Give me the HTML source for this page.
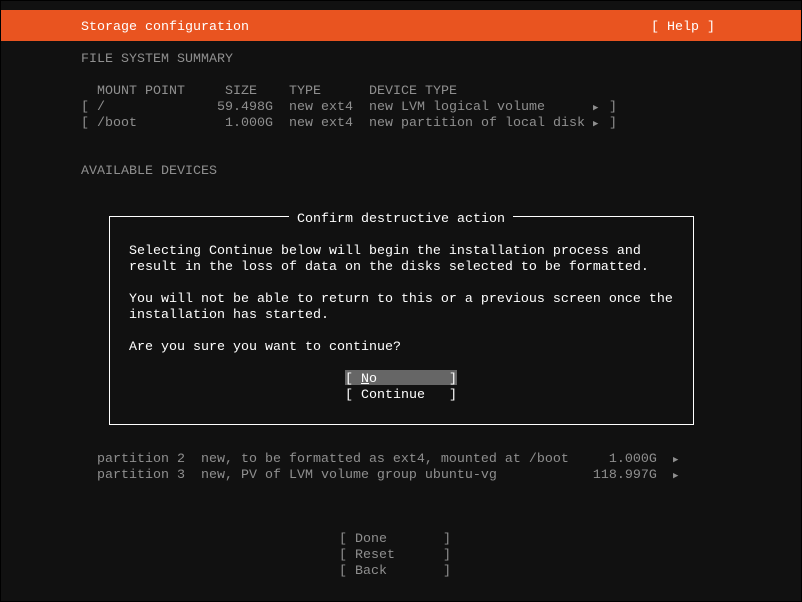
<!DOCTYPE html>
<html><head><meta charset="utf-8"><style>
html,body{margin:0;padding:0;}
body{width:802px;height:602px;background:#000;position:relative;overflow:hidden;font-family:"Liberation Mono",monospace;font-size:13.33px;}
#scr{position:absolute;left:1px;top:1px;width:800px;height:600px;background:#111;}
.t{position:absolute;white-space:pre;line-height:16px;height:16px;color:#8f8f8f;margin-top:3px;}
.w{color:#fff;}
.tr{font-size:9px;vertical-align:1px;}
#bar{position:absolute;left:1px;top:10px;width:800px;height:31px;background:#e95420;}
#dlg{position:absolute;left:109px;top:216px;width:583px;height:207px;border:1px solid #fff;}
#no{position:absolute;left:345px;top:370px;width:112px;height:15px;background:#666;}
</style></head><body>
<div id="scr"></div>
<div id="bar"></div>
<div class="t w" style="left:81px;top:17px">Storage configuration</div>
<div class="t w" style="left:651px;top:17px">[ Help ]</div>
<div class="t" style="left:81px;top:49px">FILE SYSTEM SUMMARY</div>
<div class="t" style="left:97px;top:81px">MOUNT POINT</div>
<div class="t" style="left:225px;top:81px">SIZE</div>
<div class="t" style="left:289px;top:81px">TYPE</div>
<div class="t" style="left:369px;top:81px">DEVICE TYPE</div>
<div class="t" style="left:81px;top:97px">[ /</div>
<div class="t" style="left:217px;top:97px">59.498G</div>
<div class="t" style="left:289px;top:97px">new ext4</div>
<div class="t" style="left:369px;top:97px">new LVM logical volume</div>
<div class="t" style="left:593px;top:97px"><span class="tr">▶</span></div>
<div class="t" style="left:609px;top:97px">]</div>
<div class="t" style="left:81px;top:113px">[ /boot</div>
<div class="t" style="left:225px;top:113px">1.000G</div>
<div class="t" style="left:289px;top:113px">new ext4</div>
<div class="t" style="left:369px;top:113px">new partition of local disk</div>
<div class="t" style="left:593px;top:113px"><span class="tr">▶</span></div>
<div class="t" style="left:609px;top:113px">]</div>
<div class="t" style="left:81px;top:161px">AVAILABLE DEVICES</div>
<div id="dlg"></div>
<div style="position:absolute;left:289px;top:210px;width:224px;height:12px;background:#111"></div>
<div class="t w" style="left:289px;top:209px"> Confirm destructive action </div>
<div class="t w" style="left:129px;top:241px">Selecting Continue below will begin the installation process and</div>
<div class="t w" style="left:129px;top:257px">result in the loss of data on the disks selected to be formatted.</div>
<div class="t w" style="left:129px;top:289px">You will not be able to return to this or a previous screen once the</div>
<div class="t w" style="left:129px;top:305px">installation has started.</div>
<div class="t w" style="left:129px;top:337px">Are you sure you want to continue?</div>
<div id="no"></div>
<div class="t w" style="left:345px;top:369px">[ <u>N</u>o         ]</div>
<div class="t w" style="left:345px;top:385px">[ Continue   ]</div>
<div class="t" style="left:97px;top:449px">partition 2  new, to be formatted as ext4, mounted at /boot     1.000G</div>
<div class="t" style="left:673px;top:449px"><span class="tr">▶</span></div>
<div class="t" style="left:97px;top:465px">partition 3  new, PV of LVM volume group ubuntu-vg            118.997G</div>
<div class="t" style="left:673px;top:465px"><span class="tr">▶</span></div>
<div class="t" style="left:339px;top:529px">[ Done       ]</div>
<div class="t" style="left:339px;top:545px">[ Reset      ]</div>
<div class="t" style="left:339px;top:561px">[ Back       ]</div>
</body></html>
